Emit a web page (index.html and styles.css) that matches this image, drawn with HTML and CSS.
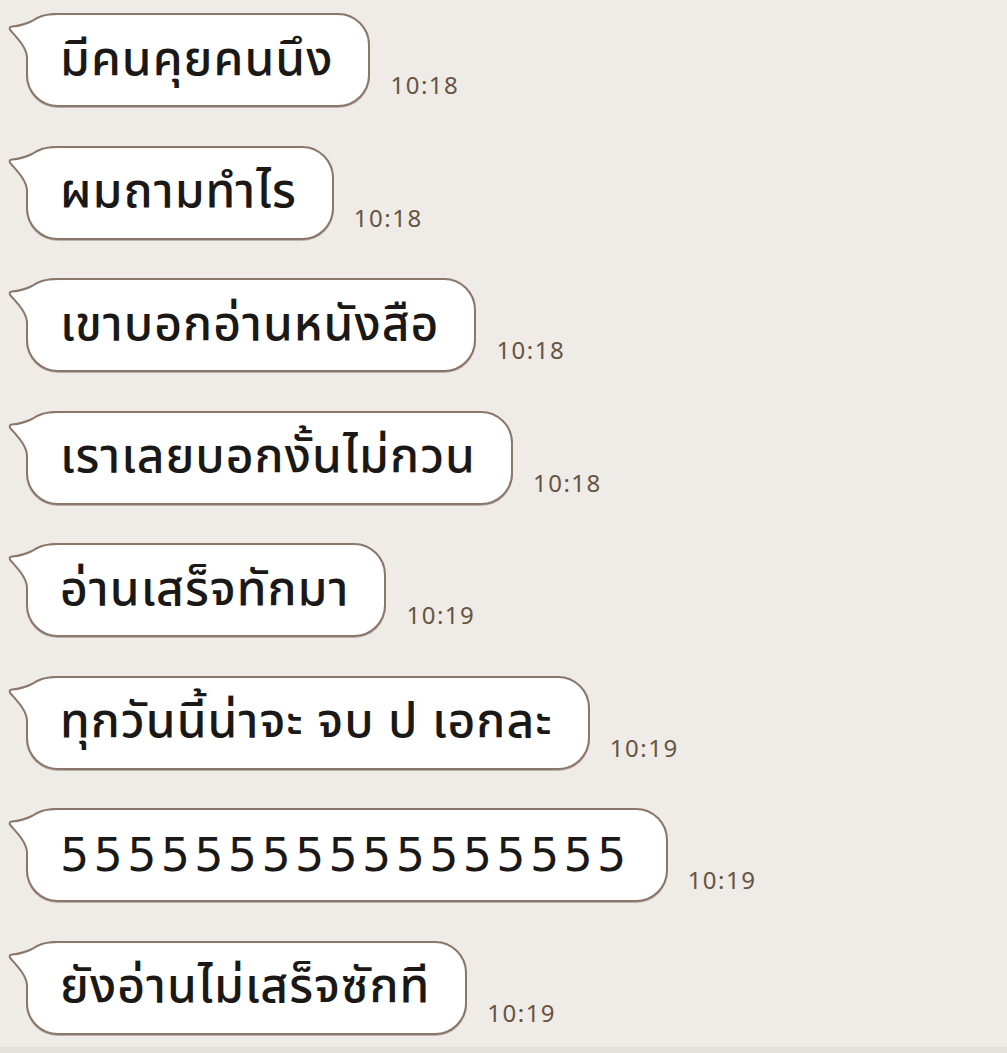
FILE: index.html
```html
<!DOCTYPE html>
<html lang="th">
<head>
    <meta charset="UTF-8">
    <meta name="viewport" content="width=device-width, initial-scale=1.0">
    <title>Chat</title>
    <link rel="stylesheet" href="styles.css">
</head>
<body>
    <div class="chat">
        <div class="row">
            <div class="bubble">
                <svg class="tail" viewBox="-18 0 52 50" width="52" height="50"><path class="tail-fill" d="M32 1 C18 1 12 4 6 8 C0 11 -8 13 -14 13.5 C-17 14 -17 16 -15 18 C-8 26 0 34 1 44 L1 50 L32 50 Z"/><path class="tail-line" d="M32 1 C18 1 12 4 6 8 C0 11 -8 13 -14 13.5 C-17 14 -17 16 -15 18 C-8 26 0 34 1 44 L1 50"/></svg>
                <span class="msg">มีคนคุยคนนึง</span>
            </div>
            <span class="time">10:18</span>
        </div>
        <div class="row">
            <div class="bubble">
                <svg class="tail" viewBox="-18 0 52 50" width="52" height="50"><path class="tail-fill" d="M32 1 C18 1 12 4 6 8 C0 11 -8 13 -14 13.5 C-17 14 -17 16 -15 18 C-8 26 0 34 1 44 L1 50 L32 50 Z"/><path class="tail-line" d="M32 1 C18 1 12 4 6 8 C0 11 -8 13 -14 13.5 C-17 14 -17 16 -15 18 C-8 26 0 34 1 44 L1 50"/></svg>
                <span class="msg">ผมถามทำไร</span>
            </div>
            <span class="time">10:18</span>
        </div>
        <div class="row">
            <div class="bubble">
                <svg class="tail" viewBox="-18 0 52 50" width="52" height="50"><path class="tail-fill" d="M32 1 C18 1 12 4 6 8 C0 11 -8 13 -14 13.5 C-17 14 -17 16 -15 18 C-8 26 0 34 1 44 L1 50 L32 50 Z"/><path class="tail-line" d="M32 1 C18 1 12 4 6 8 C0 11 -8 13 -14 13.5 C-17 14 -17 16 -15 18 C-8 26 0 34 1 44 L1 50"/></svg>
                <span class="msg">เขาบอกอ่านหนังสือ</span>
            </div>
            <span class="time">10:18</span>
        </div>
        <div class="row">
            <div class="bubble">
                <svg class="tail" viewBox="-18 0 52 50" width="52" height="50"><path class="tail-fill" d="M32 1 C18 1 12 4 6 8 C0 11 -8 13 -14 13.5 C-17 14 -17 16 -15 18 C-8 26 0 34 1 44 L1 50 L32 50 Z"/><path class="tail-line" d="M32 1 C18 1 12 4 6 8 C0 11 -8 13 -14 13.5 C-17 14 -17 16 -15 18 C-8 26 0 34 1 44 L1 50"/></svg>
                <span class="msg">เราเลยบอกงั้นไม่กวน</span>
            </div>
            <span class="time">10:18</span>
        </div>
        <div class="row">
            <div class="bubble">
                <svg class="tail" viewBox="-18 0 52 50" width="52" height="50"><path class="tail-fill" d="M32 1 C18 1 12 4 6 8 C0 11 -8 13 -14 13.5 C-17 14 -17 16 -15 18 C-8 26 0 34 1 44 L1 50 L32 50 Z"/><path class="tail-line" d="M32 1 C18 1 12 4 6 8 C0 11 -8 13 -14 13.5 C-17 14 -17 16 -15 18 C-8 26 0 34 1 44 L1 50"/></svg>
                <span class="msg">อ่านเสร็จทักมา</span>
            </div>
            <span class="time">10:19</span>
        </div>
        <div class="row">
            <div class="bubble">
                <svg class="tail" viewBox="-18 0 52 50" width="52" height="50"><path class="tail-fill" d="M32 1 C18 1 12 4 6 8 C0 11 -8 13 -14 13.5 C-17 14 -17 16 -15 18 C-8 26 0 34 1 44 L1 50 L32 50 Z"/><path class="tail-line" d="M32 1 C18 1 12 4 6 8 C0 11 -8 13 -14 13.5 C-17 14 -17 16 -15 18 C-8 26 0 34 1 44 L1 50"/></svg>
                <span class="msg">ทุกวันนี้น่าจะ จบ ป เอกละ</span>
            </div>
            <span class="time">10:19</span>
        </div>
        <div class="row">
            <div class="bubble">
                <svg class="tail" viewBox="-18 0 52 50" width="52" height="50"><path class="tail-fill" d="M32 1 C18 1 12 4 6 8 C0 11 -8 13 -14 13.5 C-17 14 -17 16 -15 18 C-8 26 0 34 1 44 L1 50 L32 50 Z"/><path class="tail-line" d="M32 1 C18 1 12 4 6 8 C0 11 -8 13 -14 13.5 C-17 14 -17 16 -15 18 C-8 26 0 34 1 44 L1 50"/></svg>
                <span class="msg digits">55555555555555555</span>
            </div>
            <span class="time">10:19</span>
        </div>
        <div class="row">
            <div class="bubble">
                <svg class="tail" viewBox="-18 0 52 50" width="52" height="50"><path class="tail-fill" d="M32 1 C18 1 12 4 6 8 C0 11 -8 13 -14 13.5 C-17 14 -17 16 -15 18 C-8 26 0 34 1 44 L1 50 L32 50 Z"/><path class="tail-line" d="M32 1 C18 1 12 4 6 8 C0 11 -8 13 -14 13.5 C-17 14 -17 16 -15 18 C-8 26 0 34 1 44 L1 50"/></svg>
                <span class="msg">ยังอ่านไม่เสร็จซักที</span>
            </div>
            <span class="time">10:19</span>
        </div>
    </div>
    <div class="bottom-bar"></div>
</body>
</html>
```
FILE: styles.css
```css
body {
    margin: 0;
    background-color: #efebe6;
    font-family: "Noto Sans Thai", "Noto Sans", sans-serif;
}
.chat {
    display: flex;
    flex-direction: column;
    gap: 38.5px;
    padding: 13px 0 0 26px;
    height: 1047px;
    box-sizing: border-box;
}
.row {
    display: flex;
    align-items: flex-end;
    gap: 20px;
}
.bubble {
    position: relative;
    display: flex;
    align-items: center;
    height: 94px;
    box-sizing: border-box;
    padding: 0 35px 0 32px;
    background-color: #fff;
    border: 2px solid #8b766a;
    border-radius: 32px;
    box-shadow: 0 1px 0 rgba(90, 70, 60, 0.35);
}
.tail {
    position: absolute;
    left: -20px;
    top: -2px;
    overflow: visible;
}
.tail-fill {
    fill: #fff;
}
.tail-line {
    fill: none;
    stroke: #8b766a;
    stroke-width: 2;
}
.msg {
    position: relative;
    font-size: 48px;
    font-weight: 500;
    letter-spacing: 1px;
    color: #1b1917;
    white-space: nowrap;
}
.msg.digits {
    font-family: "DejaVu Sans", sans-serif;
    font-size: 46px;
    font-weight: 400;
    letter-spacing: 4.3px;
}
.time {
    margin-bottom: 6px;
    font-family: "Noto Sans", sans-serif;
    font-size: 24px;
    letter-spacing: 1.5px;
    color: #665443;
}
.bottom-bar {
    height: 6px;
    background-color: #e4e0db;
}
```
